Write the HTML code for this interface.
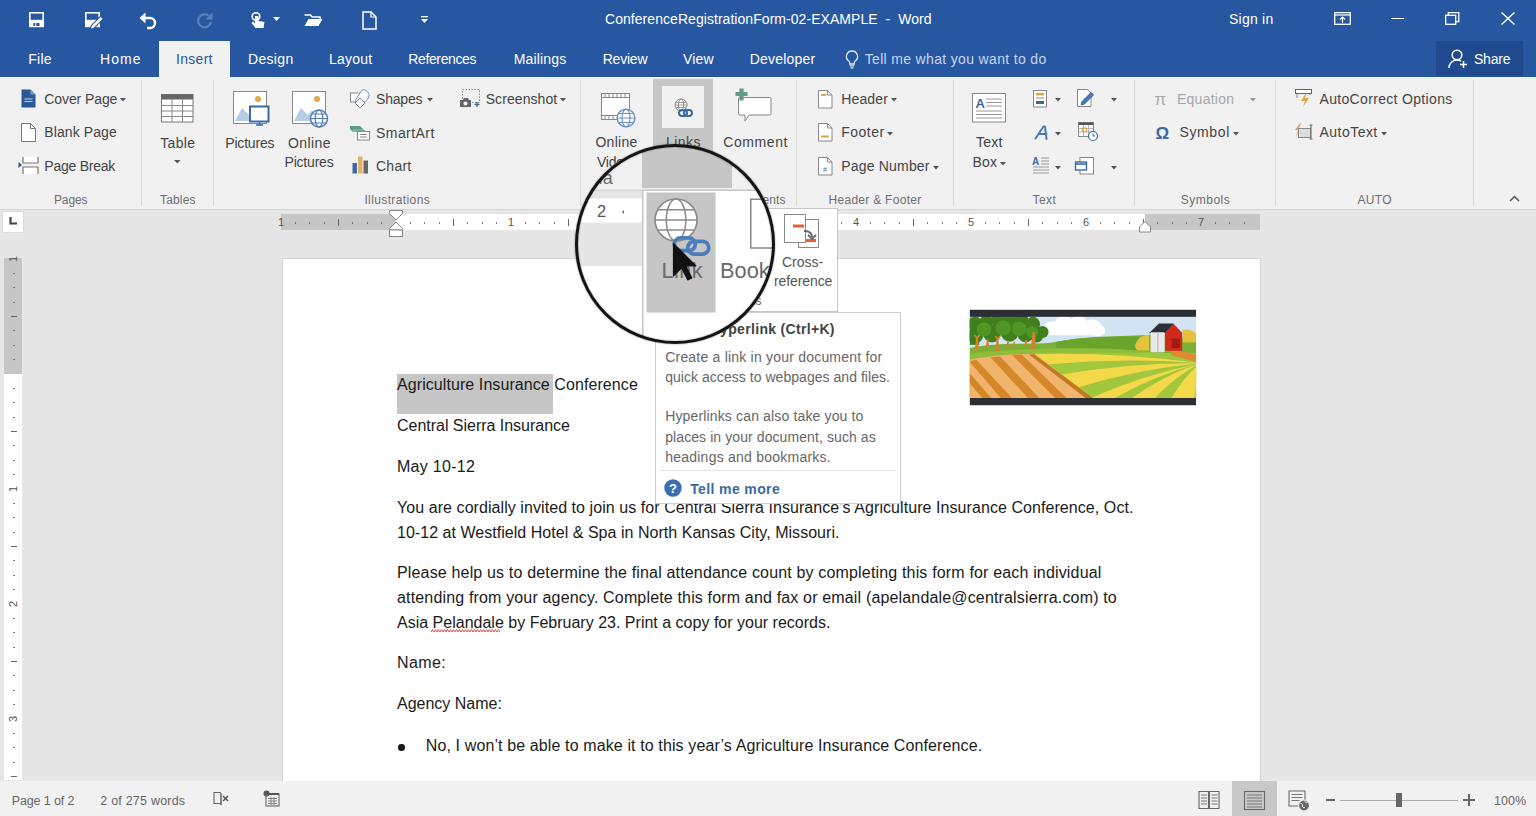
<!DOCTYPE html>
<html><head><meta charset="utf-8"><style>
html,body{margin:0;padding:0;}
body{width:1536px;height:816px;overflow:hidden;position:relative;background:#e6e6e6;font-family:"Liberation Sans", sans-serif;}
.t{position:absolute;white-space:pre;line-height:1;}
.r{position:absolute;}
svg.r{overflow:visible;}
</style></head><body>
<div class="r" style="left:0.00px;top:0.00px;width:1536.00px;height:77.00px;background:#2857a2;"></div>
<div class="r" style="left:159.00px;top:41.00px;width:71.00px;height:36.00px;background:#f1f1f1;"></div>
<div class="r" style="left:1436.00px;top:41.00px;width:87.00px;height:35.00px;background:#1f4b8e;"></div>
<svg class="r" style="left:29.00px;top:12.00px;" width="16" height="16" viewBox="0 0 16 16"><rect x="0" y="0" width="15" height="15.2" fill="#fff"/><rect x="1.6" y="1.6" width="11.8" height="6.2" fill="#2857a2"/><rect x="4.3" y="11" width="2" height="3" fill="#2857a2"/><rect x="7.3" y="11" width="3.2" height="3" fill="#2857a2"/></svg>
<svg class="r" style="left:85.00px;top:12.00px;" width="18" height="18" viewBox="0 0 18 18"><rect x="0" y="0" width="15" height="15.2" fill="#fff"/><rect x="1.6" y="1.6" width="11.8" height="6.2" fill="#2857a2"/><path d="M5 17.5l1.2-3.8 9.5-9.5 2.6 2.6-9.5 9.5z" fill="#fff" stroke="#2857a2" stroke-width="1.2"/></svg>
<svg class="r" style="left:139.00px;top:12.00px;" width="19" height="17" viewBox="0 0 19 17"><path d="M3 6h8a5 5 0 0 1 0 10H8" fill="none" stroke="#fff" stroke-width="2.4"/><path d="M0.5 6l6-5.5v11z" fill="#fff"/></svg>
<svg class="r" style="left:196.00px;top:12.00px;" width="17" height="17" viewBox="0 0 17 17"><path d="M13 4A6.5 6.5 0 1 0 15 10" fill="none" stroke="#5b7fb8" stroke-width="2.2"/><path d="M16.5 0.5v7h-7z" fill="#5b7fb8"/></svg>
<svg class="r" style="left:250.00px;top:12.00px;" width="17" height="17" viewBox="0 0 17 17"><circle cx="6" cy="4.5" r="3.8" fill="none" stroke="#fff" stroke-width="1.6"/><path d="M5 4v7l-2-1.5-1.5 1.5 4 5h8l1-6-6-1V4z" fill="#fff"/></svg>
<svg class="r" style="left:273.00px;top:17.00px;" width="8" height="5" viewBox="0 0 8 5"><path d="M0 0h7l-3.5 4z" fill="#fff"/></svg>
<svg class="r" style="left:304.00px;top:13.00px;" width="19" height="14" viewBox="0 0 19 14"><path d="M0.5 2h6l1.5 2h8v2" fill="none" stroke="#fff" stroke-width="1.5"/><path d="M0.5 2v11h14l4-7H4.5L0.5 13" fill="#fff"/></svg>
<svg class="r" style="left:362.00px;top:11.00px;" width="15" height="19" viewBox="0 0 15 19"><path d="M1 1h8l5 5v12H1z" fill="none" stroke="#fff" stroke-width="1.5"/><path d="M9 1v5h5" fill="none" stroke="#fff" stroke-width="1.2"/></svg>
<svg class="r" style="left:421.00px;top:16.00px;" width="8" height="8" viewBox="0 0 8 8"><rect x="0" y="0" width="7" height="1.3" fill="#fff"/><path d="M0 3h7l-3.5 4z" fill="#fff"/></svg>
<div class="t" style="left:605.00px;top:11.85px;font-size:14px;color:#ffffff;letter-spacing:0.051px;">ConferenceRegistrationForm-02-EXAMPLE  -  Word</div>
<div class="t" style="left:1229.00px;top:12.15px;font-size:14px;color:#ffffff;letter-spacing:0.232px;">Sign in</div>
<svg class="r" style="left:1334.00px;top:12.00px;" width="17" height="13" viewBox="0 0 17 13"><rect x="0.7" y="0.7" width="15.6" height="11.6" fill="none" stroke="#fff" stroke-width="1.3"/><path d="M0.7 3h15.6" stroke="#fff" stroke-width="1.2"/><path d="M8.5 11V5M6 7.5l2.5-2.5 2.5 2.5" fill="none" stroke="#fff" stroke-width="1.2"/></svg>
<div class="r" style="left:1391.00px;top:18.00px;width:13.00px;height:1.30px;background:#fff;"></div>
<svg class="r" style="left:1445.00px;top:12.00px;" width="15" height="13" viewBox="0 0 15 13"><rect x="0.7" y="3.3" width="10" height="9" fill="none" stroke="#fff" stroke-width="1.3"/><path d="M3.3 3.3V0.7h10.5v9h-3" fill="none" stroke="#fff" stroke-width="1.3"/></svg>
<svg class="r" style="left:1501.00px;top:12.00px;" width="14" height="13" viewBox="0 0 14 13"><path d="M0.5 0.5l13 12M13.5 0.5l-13 12" stroke="#fff" stroke-width="1.4"/></svg>
<div class="t" style="left:28.30px;top:51.65px;font-size:14px;color:#fff;letter-spacing:0.213px;">File</div>
<div class="t" style="left:100.00px;top:51.65px;font-size:14px;color:#fff;letter-spacing:1.051px;">Home</div>
<div class="t" style="left:176.00px;top:51.65px;font-size:14px;color:#2b579a;letter-spacing:0.297px;">Insert</div>
<div class="t" style="left:248.00px;top:51.65px;font-size:14px;color:#fff;letter-spacing:0.324px;">Design</div>
<div class="t" style="left:329.00px;top:51.65px;font-size:14px;color:#fff;letter-spacing:0.233px;">Layout</div>
<div class="t" style="left:408.30px;top:51.65px;font-size:14px;color:#fff;letter-spacing:-0.377px;">References</div>
<div class="t" style="left:513.70px;top:51.65px;font-size:14px;color:#fff;letter-spacing:0.164px;">Mailings</div>
<div class="t" style="left:602.70px;top:51.65px;font-size:14px;color:#fff;letter-spacing:-0.221px;">Review</div>
<div class="t" style="left:683.00px;top:51.65px;font-size:14px;color:#fff;letter-spacing:0.136px;">View</div>
<div class="t" style="left:749.70px;top:51.65px;font-size:14px;color:#fff;letter-spacing:0.211px;">Developer</div>
<svg class="r" style="left:845.00px;top:50.00px;" width="14" height="19" viewBox="0 0 14 19"><path d="M7 1a5.5 5.5 0 0 0-3.2 10c.6.5 1 1.3 1 2.2V14h4.4v-.8c0-.9.4-1.7 1-2.2A5.5 5.5 0 0 0 7 1z" fill="none" stroke="#dfe7f3" stroke-width="1.3"/><path d="M4.8 15.8h4.4M5.5 17.8h3" stroke="#dfe7f3" stroke-width="1.3"/></svg>
<div class="t" style="left:864.70px;top:51.65px;font-size:14px;color:#c6d6ee;letter-spacing:0.336px;">Tell me what you want to do</div>
<svg class="r" style="left:1448.00px;top:49.00px;" width="20" height="20" viewBox="0 0 20 20"><circle cx="9" cy="6" r="4.8" fill="none" stroke="#fff" stroke-width="1.5"/><path d="M1 19c0-4.5 3.5-8 8-8 1.5 0 2.8.4 4 1" fill="none" stroke="#fff" stroke-width="1.5"/><path d="M15.5 12v7M12 15.5h7" stroke="#fff" stroke-width="1.5"/></svg>
<div class="t" style="left:1474.00px;top:52.15px;font-size:14px;color:#fff;letter-spacing:-0.215px;">Share</div>
<div class="r" style="left:0.00px;top:77.00px;width:1536.00px;height:132.00px;background:#f1f1f1;"></div>
<div class="r" style="left:0.00px;top:209.00px;width:1536.00px;height:1.00px;background:#d6d6d6;"></div>
<div class="r" style="left:140.50px;top:80.00px;width:1.00px;height:126.00px;background:#dadada;"></div>
<div class="r" style="left:213.00px;top:80.00px;width:1.00px;height:126.00px;background:#dadada;"></div>
<div class="r" style="left:579.50px;top:80.00px;width:1.00px;height:126.00px;background:#dadada;"></div>
<div class="r" style="left:795.50px;top:80.00px;width:1.00px;height:126.00px;background:#dadada;"></div>
<div class="r" style="left:952.50px;top:80.00px;width:1.00px;height:126.00px;background:#dadada;"></div>
<div class="r" style="left:1134.00px;top:80.00px;width:1.00px;height:126.00px;background:#dadada;"></div>
<div class="r" style="left:1274.50px;top:80.00px;width:1.00px;height:126.00px;background:#dadada;"></div>
<div class="r" style="left:1473.00px;top:80.00px;width:1.00px;height:126.00px;background:#dadada;"></div>
<svg class="r" style="left:21.00px;top:89.00px;" width="15" height="19" viewBox="0 0 15 19"><path d="M0.5 0.5h9l5 5v13h-14z" fill="#2b5797"/><path d="M9.5 0.5v5h5" fill="#7a9ccc"/><path d="M3.5 10h8M3.5 12.5h8" stroke="#c5d4ea" stroke-width="1"/></svg>
<div class="t" style="left:44.30px;top:92.05px;font-size:14px;color:#444;letter-spacing:-0.093px;">Cover Page</div>
<svg class="r" style="left:120.00px;top:98.00px;" width="6" height="4" viewBox="0 0 6 4"><path d="M0 0h6l-3 3.5z" fill="#555"/></svg>
<svg class="r" style="left:21.00px;top:123.00px;" width="15" height="19" viewBox="0 0 15 19"><path d="M0.5 0.5h9l5 5v13h-14z" fill="#fff" stroke="#777" stroke-width="1"/><path d="M9.5 0.5v5h5" fill="none" stroke="#777" stroke-width="1"/></svg>
<div class="t" style="left:44.30px;top:125.15px;font-size:14px;color:#444;letter-spacing:0.099px;">Blank Page</div>
<svg class="r" style="left:18.00px;top:156.00px;" width="22" height="19" viewBox="0 0 22 19"><path d="M5 1v6h15V1M5 18v-7h15v7" fill="#fff" stroke="#777" stroke-width="1.2"/><path d="M0.5 6l3.5 3-3.5 3z" fill="#2b5797"/></svg>
<div class="t" style="left:44.30px;top:158.95px;font-size:14px;color:#444;letter-spacing:-0.240px;">Page Break</div>
<div class="t" style="left:54.00px;top:194.24px;font-size:12px;color:#6e6e6e;letter-spacing:-0.132px;">Pages</div>
<svg class="r" style="left:160.50px;top:93.50px;" width="33" height="29" viewBox="0 0 33 29"><rect x="0.5" y="0.5" width="31.5" height="27.5" fill="#fff" stroke="#777" stroke-width="1"/><rect x="0.5" y="0.5" width="31.5" height="5" fill="#666"/><path d="M0.5 11.5h31.5M0.5 17h31.5M0.5 22.5h31.5M11 5.5v22.5M21.5 5.5v22.5" stroke="#888" stroke-width="1"/></svg>
<div class="t" style="left:160.20px;top:135.85px;font-size:14px;color:#444;letter-spacing:0.333px;">Table</div>
<svg class="r" style="left:174.00px;top:159.50px;" width="7" height="4" viewBox="0 0 7 4"><path d="M0 0h6.5l-3.25 3.5z" fill="#555"/></svg>
<div class="t" style="left:160.00px;top:194.24px;font-size:12px;color:#6e6e6e;letter-spacing:0.162px;">Tables</div>
<svg class="r" style="left:233.00px;top:91.00px;" width="37" height="37" viewBox="0 0 37 37"><rect x="0.5" y="0.5" width="33" height="32" fill="#fff" stroke="#888" stroke-width="1"/><circle cx="25" cy="8" r="3" fill="#e1a94f"/><path d="M2 30l7-13 7 7 4-5 10 11z" fill="#b7cde6"/><rect x="17" y="15.5" width="18.5" height="15" fill="#fff" stroke="#3a6aa6" stroke-width="2"/><path d="M23 34h7M26.5 31v3" stroke="#3a6aa6" stroke-width="1.5"/></svg>
<div class="t" style="left:225.30px;top:135.85px;font-size:14px;color:#444;letter-spacing:-0.196px;">Pictures</div>
<svg class="r" style="left:292.00px;top:91.00px;" width="37" height="37" viewBox="0 0 37 37"><rect x="0.5" y="0.5" width="33" height="32" fill="#fff" stroke="#888" stroke-width="1"/><circle cx="25" cy="8" r="3" fill="#e1a94f"/><path d="M2 30l7-13 7 7 4-5 10 11z" fill="#b7cde6"/><circle cx="27" cy="27.5" r="8.5" fill="#fff" stroke="#4f7bb8" stroke-width="1.5"/><ellipse cx="27" cy="27.5" rx="3.8" ry="8.5" fill="none" stroke="#4f7bb8" stroke-width="1.2"/><path d="M18.5 27.5h17M19.8 23h14.5M19.8 32h14.5" stroke="#4f7bb8" stroke-width="1.1"/></svg>
<div class="t" style="left:288.00px;top:135.85px;font-size:14px;color:#444;letter-spacing:0.406px;">Online</div>
<div class="t" style="left:284.50px;top:155.05px;font-size:14px;color:#444;letter-spacing:-0.196px;">Pictures</div>
<svg class="r" style="left:350.00px;top:89.00px;" width="21" height="19" viewBox="0 0 21 19"><rect x="0.5" y="4" width="10" height="9" fill="#fff" stroke="#888" stroke-width="1"/><path d="M12 1c3.5-1 7.5 2 7 6-.5 3-3 5-6 7l-3 3-5-5z" fill="#fff" stroke="#6e93c4" stroke-width="1"/><path d="M10 9l5 5-5 5-5-5z" fill="#fff" stroke="#888" stroke-width="1"/></svg>
<div class="t" style="left:376.00px;top:92.15px;font-size:14px;color:#444;letter-spacing:-0.197px;">Shapes</div>
<svg class="r" style="left:426.50px;top:98.00px;" width="6" height="4" viewBox="0 0 6 4"><path d="M0 0h6l-3 3.5z" fill="#555"/></svg>
<svg class="r" style="left:460.00px;top:89.00px;" width="21" height="19" viewBox="0 0 21 19"><rect x="2.5" y="0.5" width="17" height="13" fill="none" stroke="#888" stroke-width="1" stroke-dasharray="1.5 1.5"/><path d="M0 11h3l1-2h4l1 2h2v7H0z" fill="#666"/><circle cx="5.5" cy="14.5" r="2" fill="#f1f1f1"/><path d="M14.5 15.5h5M17 13v5" stroke="#3a6aa6" stroke-width="1.4"/></svg>
<div class="t" style="left:485.70px;top:92.15px;font-size:14px;color:#444;letter-spacing:0.075px;">Screenshot</div>
<svg class="r" style="left:559.50px;top:98.00px;" width="6" height="4" viewBox="0 0 6 4"><path d="M0 0h6l-3 3.5z" fill="#555"/></svg>
<svg class="r" style="left:350.00px;top:125.00px;" width="21" height="16" viewBox="0 0 21 16"><path d="M0 1h10l3 3H5l-2 3-3-3z" fill="#5e9a8a"/><path d="M3 4h10l4 3H3z" fill="#7db0a2"/><rect x="7.5" y="6.5" width="12" height="8.5" fill="#fff" stroke="#888" stroke-width="1"/><path d="M10 9.5h7M10 12h7" stroke="#888" stroke-width="1"/></svg>
<div class="t" style="left:376.00px;top:125.95px;font-size:14px;color:#444;letter-spacing:0.439px;">SmartArt</div>
<svg class="r" style="left:352.00px;top:156.00px;" width="17" height="18" viewBox="0 0 17 18"><rect x="0.5" y="7" width="4.5" height="10.5" fill="#3a6aa6"/><rect x="6" y="0.5" width="4.5" height="17" fill="#e5b06a"/><rect x="11.5" y="4.5" width="4.5" height="13" fill="#666"/></svg>
<div class="t" style="left:376.00px;top:159.15px;font-size:14px;color:#444;letter-spacing:0.241px;">Chart</div>
<div class="t" style="left:364.40px;top:194.24px;font-size:12px;color:#6e6e6e;letter-spacing:0.384px;">Illustrations</div>
<svg class="r" style="left:601.00px;top:93.00px;" width="35" height="35" viewBox="0 0 35 35"><rect x="0.5" y="0.5" width="28" height="26" fill="#fff" stroke="#888" stroke-width="1"/><path d="M0.5 4.5h28M0.5 22.5h28" stroke="#888" stroke-width="1"/><path d="M4 0.5v4M8 0.5v4M12 0.5v4M16 0.5v4M20 0.5v4M24 0.5v4M4 22.5v4M8 22.5v4M12 22.5v4" stroke="#888" stroke-width="1"/><circle cx="25" cy="25" r="8.8" fill="#fff" stroke="#6e93c4" stroke-width="1.5"/><ellipse cx="25" cy="25" rx="4" ry="8.8" fill="none" stroke="#6e93c4" stroke-width="1.2"/><path d="M16.2 25h17.6M17.5 20.5h15M17.5 29.5h15" stroke="#6e93c4" stroke-width="1.1"/></svg>
<div class="t" style="left:595.40px;top:135.35px;font-size:14px;color:#444;letter-spacing:0.286px;">Online</div>
<div class="t" style="left:597.00px;top:154.65px;font-size:14px;color:#444;letter-spacing:-0.264px;">Video</div>
<div class="t" style="left:600.00px;top:194.24px;font-size:12px;color:#6e6e6e;letter-spacing:0.204px;">Media</div>
<div class="r" style="left:653.00px;top:79.00px;width:60.00px;height:128.00px;background:#c6c6c6;"></div>
<div class="r" style="left:661.50px;top:86.30px;width:42.50px;height:42.00px;background:#f1f1f1;"></div>
<svg class="r" style="left:674.00px;top:98.00px;" width="20" height="21" viewBox="0 0 20 21"><circle cx="7" cy="7" r="6" fill="#fff" stroke="#888" stroke-width="1"/><ellipse cx="7" cy="7" rx="2.6" ry="6" fill="none" stroke="#888" stroke-width="0.9"/><path d="M1 7h12M2 4.5h10M2 9.5h10" stroke="#888" stroke-width="0.8"/><rect x="5" y="12" width="8" height="6" rx="3" fill="none" stroke="#3a6aa6" stroke-width="2"/><rect x="10" y="12" width="8" height="6" rx="3" fill="none" stroke="#3a6aa6" stroke-width="2"/></svg>
<div class="t" style="left:666.00px;top:135.35px;font-size:14px;color:#444;letter-spacing:0.454px;">Links</div>
<div class="t" style="left:694.00px;top:194.24px;font-size:12px;color:#6e6e6e;letter-spacing:0.871px;">Links</div>
<svg class="r" style="left:735.00px;top:88.00px;" width="37" height="35" viewBox="0 0 37 35"><path d="M5 9.5h29.5a1.5 1.5 0 0 1 1.5 1.5v14.5a1.5 1.5 0 0 1-1.5 1.5H14l-4 6v-6H5a1.5 1.5 0 0 1-1.5-1.5V11A1.5 1.5 0 0 1 5 9.5z" fill="#fff" stroke="#888" stroke-width="1"/><path d="M0.5 6h12M6.5 0.5v12" stroke="#5f9a8a" stroke-width="4.2"/></svg>
<div class="t" style="left:723.30px;top:135.35px;font-size:14px;color:#444;letter-spacing:0.586px;">Comment</div>
<div class="t" style="left:727.00px;top:194.24px;font-size:12px;color:#6e6e6e;letter-spacing:0.069px;">Comments</div>
<svg class="r" style="left:818.00px;top:89.50px;" width="15" height="19" viewBox="0 0 15 19"><path d="M0.5 0.5h9l4.5 4.5v13h-13.5z" fill="#fff" stroke="#888" stroke-width="1"/><path d="M9.5 0.5v4.5h4.5" fill="none" stroke="#888" stroke-width="1"/><rect x="3" y="4" width="5" height="2" fill="#e0a54a"/></svg>
<div class="t" style="left:841.30px;top:91.65px;font-size:14px;color:#444;letter-spacing:0.116px;">Header</div>
<svg class="r" style="left:891.00px;top:98.00px;" width="6" height="4" viewBox="0 0 6 4"><path d="M0 0h6l-3 3.5z" fill="#555"/></svg>
<svg class="r" style="left:818.00px;top:123.00px;" width="15" height="19" viewBox="0 0 15 19"><path d="M0.5 0.5h9l4.5 4.5v13h-13.5z" fill="#fff" stroke="#888" stroke-width="1"/><path d="M9.5 0.5v4.5h4.5" fill="none" stroke="#888" stroke-width="1"/><rect x="3" y="12.5" width="8" height="2" fill="#e0a54a"/></svg>
<div class="t" style="left:841.30px;top:125.40px;font-size:14px;color:#444;letter-spacing:0.457px;">Footer</div>
<svg class="r" style="left:886.50px;top:132.00px;" width="6" height="4" viewBox="0 0 6 4"><path d="M0 0h6l-3 3.5z" fill="#555"/></svg>
<svg class="r" style="left:818.00px;top:157.00px;" width="15" height="19" viewBox="0 0 15 19"><path d="M0.5 0.5h9l4.5 4.5v13h-13.5z" fill="#fff" stroke="#888" stroke-width="1"/><path d="M9.5 0.5v4.5h4.5" fill="none" stroke="#888" stroke-width="1"/><text x="5" y="14.5" font-size="7" fill="#3a6aa6" font-family="Liberation Sans">#</text></svg>
<div class="t" style="left:841.30px;top:159.15px;font-size:14px;color:#444;letter-spacing:0.182px;">Page Number</div>
<svg class="r" style="left:932.50px;top:166.00px;" width="6" height="4" viewBox="0 0 6 4"><path d="M0 0h6l-3 3.5z" fill="#555"/></svg>
<div class="t" style="left:828.50px;top:194.24px;font-size:12px;color:#6e6e6e;letter-spacing:0.288px;">Header &amp; Footer</div>
<svg class="r" style="left:971.50px;top:93.00px;" width="35" height="30" viewBox="0 0 35 30"><rect x="0.5" y="0.5" width="33" height="28.5" fill="#fff" stroke="#888" stroke-width="1"/><text x="3.5" y="15" font-size="13" font-weight="bold" fill="#3a6aa6" font-family="Liberation Sans">A</text><path d="M14 6h16M14 9.5h16M14 13h16M4 18h26M4 21.5h26M4 25h26" stroke="#999" stroke-width="1"/></svg>
<div class="t" style="left:976.00px;top:135.40px;font-size:14px;color:#444;letter-spacing:0.275px;">Text</div>
<div class="t" style="left:972.50px;top:154.65px;font-size:14px;color:#444;letter-spacing:0.188px;">Box</div>
<svg class="r" style="left:999.50px;top:161.50px;" width="6" height="4" viewBox="0 0 6 4"><path d="M0 0h6l-3 3.5z" fill="#555"/></svg>
<svg class="r" style="left:1033.00px;top:89.50px;" width="15" height="18" viewBox="0 0 15 18"><rect x="0.5" y="0.5" width="13" height="16.5" fill="#fff" stroke="#888" stroke-width="1"/><rect x="3" y="3" width="8" height="2.5" fill="#e0a54a"/><path d="M3 8h8" stroke="#888" stroke-width="1"/><rect x="3" y="11" width="8" height="3" fill="#3a6aa6"/></svg>
<svg class="r" style="left:1055.00px;top:98.00px;" width="6" height="4" viewBox="0 0 6 4"><path d="M0 0h6l-3 3.5z" fill="#555"/></svg>
<svg class="r" style="left:1034.00px;top:125.00px;" width="14" height="15" viewBox="0 0 14 15"><path d="M1.5 13.5L9.5 1.5h1.5l1.5 12.5M4.5 9h8" fill="none" stroke="#4a78b5" stroke-width="2" stroke-linejoin="round" stroke-linecap="round"/></svg>
<svg class="r" style="left:1055.00px;top:132.00px;" width="6" height="4" viewBox="0 0 6 4"><path d="M0 0h6l-3 3.5z" fill="#555"/></svg>
<svg class="r" style="left:1032.00px;top:156.00px;" width="19" height="19" viewBox="0 0 19 19"><text x="0" y="9" font-size="10" font-weight="bold" fill="#3a6aa6" font-family="Liberation Sans">A</text><path d="M9 2h8M9 5h8M9 8h8M1 11h16M1 14h16M1 17h16" stroke="#999" stroke-width="1"/></svg>
<svg class="r" style="left:1055.00px;top:166.00px;" width="6" height="4" viewBox="0 0 6 4"><path d="M0 0h6l-3 3.5z" fill="#555"/></svg>
<svg class="r" style="left:1076.50px;top:89.00px;" width="19" height="19" viewBox="0 0 19 19"><path d="M0.5 0.5h10l3.5 3.5v13.5H0.5z" fill="#fff" stroke="#888" stroke-width="1"/><path d="M4 16l1-3.5 9-9 2.5 2.5-9 9z" fill="#4a78b5" stroke="#3a6aa6" stroke-width="1"/></svg>
<svg class="r" style="left:1110.50px;top:98.00px;" width="6" height="4" viewBox="0 0 6 4"><path d="M0 0h6l-3 3.5z" fill="#555"/></svg>
<svg class="r" style="left:1077.50px;top:122.00px;" width="21" height="20" viewBox="0 0 21 20"><rect x="0.5" y="0.5" width="15" height="14" fill="#fff" stroke="#888" stroke-width="1"/><rect x="0.5" y="0.5" width="15" height="2.5" fill="#555"/><path d="M0.5 6.5h15M0.5 10h15M5.5 3v11.5M10.5 3v11.5" stroke="#aaa" stroke-width="0.9"/><rect x="4.5" y="6" width="4" height="3.5" fill="none" stroke="#e0a54a" stroke-width="1"/><circle cx="15" cy="14" r="4.5" fill="#fff" stroke="#3a6aa6" stroke-width="1.2"/><path d="M15 11.5v2.5h2" fill="none" stroke="#3a6aa6" stroke-width="1"/></svg>
<svg class="r" style="left:1075.00px;top:157.00px;" width="20" height="18" viewBox="0 0 20 18"><rect x="5" y="0.5" width="13.5" height="16.5" fill="#fff" stroke="#888" stroke-width="1"/><rect x="0.5" y="5" width="11" height="8" fill="#fff" stroke="#3a6aa6" stroke-width="1.4"/><path d="M0.5 7h11" stroke="#3a6aa6" stroke-width="1.6"/></svg>
<svg class="r" style="left:1110.50px;top:166.00px;" width="6" height="4" viewBox="0 0 6 4"><path d="M0 0h6l-3 3.5z" fill="#555"/></svg>
<div class="t" style="left:1032.50px;top:194.24px;font-size:12px;color:#6e6e6e;letter-spacing:0.414px;">Text</div>
<div class="t" style="left:1154.50px;top:91.11px;font-size:17px;color:#aaa;font-family:"Liberation Serif";">π</div>
<div class="t" style="left:1177.00px;top:91.65px;font-size:14px;color:#a6a6a6;letter-spacing:0.247px;">Equation</div>
<svg class="r" style="left:1250.00px;top:98.00px;" width="6" height="4" viewBox="0 0 6 4"><path d="M0 0h6l-3 3.5z" fill="#999"/></svg>
<div class="t" style="left:1155.50px;top:124.61px;font-size:17px;color:#3a6aa6;font-weight:bold;font-family:"Liberation Serif";">Ω</div>
<div class="t" style="left:1179.50px;top:125.15px;font-size:14px;color:#444;letter-spacing:0.613px;">Symbol</div>
<svg class="r" style="left:1232.50px;top:132.00px;" width="6" height="4" viewBox="0 0 6 4"><path d="M0 0h6l-3 3.5z" fill="#555"/></svg>
<div class="t" style="left:1180.75px;top:194.24px;font-size:12px;color:#6e6e6e;letter-spacing:0.497px;">Symbols</div>
<svg class="r" style="left:1295.00px;top:89.00px;" width="18" height="19" viewBox="0 0 18 19"><rect x="0.5" y="0.5" width="16" height="4" fill="#fff" stroke="#3a6aa6" stroke-width="1"/><path d="M2 5v4M15 5v1" stroke="#888" stroke-width="1"/><path d="M11 4l-5 8h4l-2 6 6-9h-4l2-5z" fill="#e0a54a"/></svg>
<div class="t" style="left:1319.50px;top:91.65px;font-size:14px;color:#444;letter-spacing:0.329px;">AutoCorrect Options</div>
<svg class="r" style="left:1294.00px;top:122.00px;" width="21" height="19" viewBox="0 0 21 19"><path d="M6 1L1 8h3l-2 6 6-8H5l2-5z" fill="#e0a54a"/><rect x="4.5" y="6.5" width="12" height="9" fill="#ddd" stroke="#888" stroke-width="1"/><path d="M17 3v14M15.5 3h3M15.5 17h3" stroke="#666" stroke-width="1"/></svg>
<div class="t" style="left:1319.50px;top:125.15px;font-size:14px;color:#444;letter-spacing:0.468px;">AutoText</div>
<svg class="r" style="left:1380.50px;top:132.00px;" width="6" height="4" viewBox="0 0 6 4"><path d="M0 0h6l-3 3.5z" fill="#555"/></svg>
<div class="t" style="left:1357.50px;top:194.24px;font-size:12px;color:#6e6e6e;letter-spacing:0.294px;">AUTO</div>
<svg class="r" style="left:1509.00px;top:195.00px;" width="11" height="7" viewBox="0 0 11 7"><path d="M1 6l4.5-4.5L10 6" fill="none" stroke="#555" stroke-width="1.5"/></svg>
<div class="r" style="left:0.00px;top:210.00px;width:1536.00px;height:571.00px;background:#e6e6e6;"></div>
<div class="r" style="left:3.00px;top:212.00px;width:20.00px;height:20.00px;background:#fff;box-shadow:0 0 0 1px #dcdcdc;"></div>
<svg class="r" style="left:9.00px;top:217.00px;" width="8" height="8" viewBox="0 0 8 8"><path d="M1.5 0v6.5H8" fill="none" stroke="#444" stroke-width="2.2"/></svg>
<div class="r" style="left:281.00px;top:213.50px;width:979.00px;height:16.50px;background:#fff;"></div>
<div class="r" style="left:281.00px;top:213.50px;width:115.00px;height:16.50px;background:#c6c6c6;"></div>
<div class="r" style="left:1145.00px;top:213.50px;width:115.00px;height:16.50px;background:#c6c6c6;"></div>
<div class="t" style="left:278.00px;top:216.69px;font-size:11px;color:#555;">1</div>
<div class="r" style="left:294.88px;top:221.50px;width:1.10px;height:2.00px;background:#777;"></div>
<div class="r" style="left:309.25px;top:221.50px;width:1.10px;height:2.00px;background:#777;"></div>
<div class="r" style="left:323.62px;top:221.50px;width:1.10px;height:2.00px;background:#777;"></div>
<div class="r" style="left:338.00px;top:219.00px;width:1.10px;height:7.00px;background:#666;"></div>
<div class="r" style="left:352.38px;top:221.50px;width:1.10px;height:2.00px;background:#777;"></div>
<div class="r" style="left:366.75px;top:221.50px;width:1.10px;height:2.00px;background:#777;"></div>
<div class="r" style="left:381.12px;top:221.50px;width:1.10px;height:2.00px;background:#777;"></div>
<div class="r" style="left:409.88px;top:221.50px;width:1.10px;height:2.00px;background:#777;"></div>
<div class="r" style="left:424.25px;top:221.50px;width:1.10px;height:2.00px;background:#777;"></div>
<div class="r" style="left:438.62px;top:221.50px;width:1.10px;height:2.00px;background:#777;"></div>
<div class="r" style="left:453.00px;top:219.00px;width:1.10px;height:7.00px;background:#666;"></div>
<div class="r" style="left:467.38px;top:221.50px;width:1.10px;height:2.00px;background:#777;"></div>
<div class="r" style="left:481.75px;top:221.50px;width:1.10px;height:2.00px;background:#777;"></div>
<div class="r" style="left:496.12px;top:221.50px;width:1.10px;height:2.00px;background:#777;"></div>
<div class="t" style="left:508.00px;top:216.69px;font-size:11px;color:#555;">1</div>
<div class="r" style="left:524.88px;top:221.50px;width:1.10px;height:2.00px;background:#777;"></div>
<div class="r" style="left:539.25px;top:221.50px;width:1.10px;height:2.00px;background:#777;"></div>
<div class="r" style="left:553.62px;top:221.50px;width:1.10px;height:2.00px;background:#777;"></div>
<div class="r" style="left:568.00px;top:219.00px;width:1.10px;height:7.00px;background:#666;"></div>
<div class="r" style="left:582.38px;top:221.50px;width:1.10px;height:2.00px;background:#777;"></div>
<div class="r" style="left:596.75px;top:221.50px;width:1.10px;height:2.00px;background:#777;"></div>
<div class="r" style="left:611.12px;top:221.50px;width:1.10px;height:2.00px;background:#777;"></div>
<div class="t" style="left:623.00px;top:216.69px;font-size:11px;color:#555;">2</div>
<div class="r" style="left:639.88px;top:221.50px;width:1.10px;height:2.00px;background:#777;"></div>
<div class="r" style="left:654.25px;top:221.50px;width:1.10px;height:2.00px;background:#777;"></div>
<div class="r" style="left:668.62px;top:221.50px;width:1.10px;height:2.00px;background:#777;"></div>
<div class="r" style="left:683.00px;top:219.00px;width:1.10px;height:7.00px;background:#666;"></div>
<div class="r" style="left:697.38px;top:221.50px;width:1.10px;height:2.00px;background:#777;"></div>
<div class="r" style="left:711.75px;top:221.50px;width:1.10px;height:2.00px;background:#777;"></div>
<div class="r" style="left:726.12px;top:221.50px;width:1.10px;height:2.00px;background:#777;"></div>
<div class="t" style="left:738.00px;top:216.69px;font-size:11px;color:#555;">3</div>
<div class="r" style="left:754.88px;top:221.50px;width:1.10px;height:2.00px;background:#777;"></div>
<div class="r" style="left:769.25px;top:221.50px;width:1.10px;height:2.00px;background:#777;"></div>
<div class="r" style="left:783.62px;top:221.50px;width:1.10px;height:2.00px;background:#777;"></div>
<div class="r" style="left:798.00px;top:219.00px;width:1.10px;height:7.00px;background:#666;"></div>
<div class="r" style="left:812.38px;top:221.50px;width:1.10px;height:2.00px;background:#777;"></div>
<div class="r" style="left:826.75px;top:221.50px;width:1.10px;height:2.00px;background:#777;"></div>
<div class="r" style="left:841.12px;top:221.50px;width:1.10px;height:2.00px;background:#777;"></div>
<div class="t" style="left:853.00px;top:216.69px;font-size:11px;color:#555;">4</div>
<div class="r" style="left:869.88px;top:221.50px;width:1.10px;height:2.00px;background:#777;"></div>
<div class="r" style="left:884.25px;top:221.50px;width:1.10px;height:2.00px;background:#777;"></div>
<div class="r" style="left:898.62px;top:221.50px;width:1.10px;height:2.00px;background:#777;"></div>
<div class="r" style="left:913.00px;top:219.00px;width:1.10px;height:7.00px;background:#666;"></div>
<div class="r" style="left:927.38px;top:221.50px;width:1.10px;height:2.00px;background:#777;"></div>
<div class="r" style="left:941.75px;top:221.50px;width:1.10px;height:2.00px;background:#777;"></div>
<div class="r" style="left:956.12px;top:221.50px;width:1.10px;height:2.00px;background:#777;"></div>
<div class="t" style="left:968.00px;top:216.69px;font-size:11px;color:#555;">5</div>
<div class="r" style="left:984.88px;top:221.50px;width:1.10px;height:2.00px;background:#777;"></div>
<div class="r" style="left:999.25px;top:221.50px;width:1.10px;height:2.00px;background:#777;"></div>
<div class="r" style="left:1013.62px;top:221.50px;width:1.10px;height:2.00px;background:#777;"></div>
<div class="r" style="left:1028.00px;top:219.00px;width:1.10px;height:7.00px;background:#666;"></div>
<div class="r" style="left:1042.38px;top:221.50px;width:1.10px;height:2.00px;background:#777;"></div>
<div class="r" style="left:1056.75px;top:221.50px;width:1.10px;height:2.00px;background:#777;"></div>
<div class="r" style="left:1071.12px;top:221.50px;width:1.10px;height:2.00px;background:#777;"></div>
<div class="t" style="left:1083.00px;top:216.69px;font-size:11px;color:#555;">6</div>
<div class="r" style="left:1099.88px;top:221.50px;width:1.10px;height:2.00px;background:#777;"></div>
<div class="r" style="left:1114.25px;top:221.50px;width:1.10px;height:2.00px;background:#777;"></div>
<div class="r" style="left:1128.62px;top:221.50px;width:1.10px;height:2.00px;background:#777;"></div>
<div class="r" style="left:1143.00px;top:219.00px;width:1.10px;height:7.00px;background:#666;"></div>
<div class="r" style="left:1157.38px;top:221.50px;width:1.10px;height:2.00px;background:#777;"></div>
<div class="r" style="left:1171.75px;top:221.50px;width:1.10px;height:2.00px;background:#777;"></div>
<div class="r" style="left:1186.12px;top:221.50px;width:1.10px;height:2.00px;background:#777;"></div>
<div class="t" style="left:1198.00px;top:216.69px;font-size:11px;color:#555;">7</div>
<div class="r" style="left:1214.88px;top:221.50px;width:1.10px;height:2.00px;background:#777;"></div>
<div class="r" style="left:1229.25px;top:221.50px;width:1.10px;height:2.00px;background:#777;"></div>
<div class="r" style="left:1243.62px;top:221.50px;width:1.10px;height:2.00px;background:#777;"></div>
<svg class="r" style="left:389.00px;top:210.00px;" width="15" height="28" viewBox="0 0 15 28"><path d="M0.5 0.5h13v3l-6.5 6.5-6.5-6.5z" fill="#fff" stroke="#888" stroke-width="1"/><path d="M7 12l6.5 6.5v1.5h-13v-1.5z" fill="#fff" stroke="#888" stroke-width="1"/><rect x="0.5" y="20" width="13" height="6.5" fill="#fff" stroke="#888" stroke-width="1"/></svg>
<svg class="r" style="left:1139.00px;top:220.50px;" width="13" height="12" viewBox="0 0 13 12"><path d="M6 0.5l5.5 5.5v5h-11v-5z" fill="#fff" stroke="#888" stroke-width="1"/></svg>
<div class="r" style="left:4.00px;top:257.50px;width:18.00px;height:522.50px;background:#fff;"></div>
<div class="r" style="left:4.00px;top:257.50px;width:18.00px;height:116.50px;background:#c6c6c6;"></div>
<div class="r" style="left:12.50px;top:272.88px;width:2.00px;height:1.10px;background:#777;"></div>
<div class="r" style="left:12.50px;top:287.25px;width:2.00px;height:1.10px;background:#777;"></div>
<div class="r" style="left:12.50px;top:301.62px;width:2.00px;height:1.10px;background:#777;"></div>
<div class="r" style="left:10.50px;top:316.00px;width:6.00px;height:1.10px;background:#666;"></div>
<div class="r" style="left:12.50px;top:330.38px;width:2.00px;height:1.10px;background:#777;"></div>
<div class="r" style="left:12.50px;top:344.75px;width:2.00px;height:1.10px;background:#777;"></div>
<div class="r" style="left:12.50px;top:359.12px;width:2.00px;height:1.10px;background:#777;"></div>
<div class="r" style="left:12.50px;top:387.88px;width:2.00px;height:1.10px;background:#777;"></div>
<div class="r" style="left:12.50px;top:402.25px;width:2.00px;height:1.10px;background:#777;"></div>
<div class="r" style="left:12.50px;top:416.62px;width:2.00px;height:1.10px;background:#777;"></div>
<div class="r" style="left:10.50px;top:431.00px;width:6.00px;height:1.10px;background:#666;"></div>
<div class="r" style="left:12.50px;top:445.38px;width:2.00px;height:1.10px;background:#777;"></div>
<div class="r" style="left:12.50px;top:459.75px;width:2.00px;height:1.10px;background:#777;"></div>
<div class="r" style="left:12.50px;top:474.12px;width:2.00px;height:1.10px;background:#777;"></div>
<div class="r" style="left:12.50px;top:502.88px;width:2.00px;height:1.10px;background:#777;"></div>
<div class="r" style="left:12.50px;top:517.25px;width:2.00px;height:1.10px;background:#777;"></div>
<div class="r" style="left:12.50px;top:531.62px;width:2.00px;height:1.10px;background:#777;"></div>
<div class="r" style="left:10.50px;top:546.00px;width:6.00px;height:1.10px;background:#666;"></div>
<div class="r" style="left:12.50px;top:560.38px;width:2.00px;height:1.10px;background:#777;"></div>
<div class="r" style="left:12.50px;top:574.75px;width:2.00px;height:1.10px;background:#777;"></div>
<div class="r" style="left:12.50px;top:589.12px;width:2.00px;height:1.10px;background:#777;"></div>
<div class="r" style="left:12.50px;top:617.88px;width:2.00px;height:1.10px;background:#777;"></div>
<div class="r" style="left:12.50px;top:632.25px;width:2.00px;height:1.10px;background:#777;"></div>
<div class="r" style="left:12.50px;top:646.62px;width:2.00px;height:1.10px;background:#777;"></div>
<div class="r" style="left:10.50px;top:661.00px;width:6.00px;height:1.10px;background:#666;"></div>
<div class="r" style="left:12.50px;top:675.38px;width:2.00px;height:1.10px;background:#777;"></div>
<div class="r" style="left:12.50px;top:689.75px;width:2.00px;height:1.10px;background:#777;"></div>
<div class="r" style="left:12.50px;top:704.12px;width:2.00px;height:1.10px;background:#777;"></div>
<div class="r" style="left:12.50px;top:732.88px;width:2.00px;height:1.10px;background:#777;"></div>
<div class="r" style="left:12.50px;top:747.25px;width:2.00px;height:1.10px;background:#777;"></div>
<div class="r" style="left:12.50px;top:761.62px;width:2.00px;height:1.10px;background:#777;"></div>
<div class="r" style="left:10.50px;top:776.00px;width:6.00px;height:1.10px;background:#666;"></div>
<svg class="r" style="left:0.00px;top:0.00px;" width="30" height="816" viewBox="0 0 30 816"><text x="13" y="259.0" transform="rotate(-90 13 259.0)" text-anchor="middle" dominant-baseline="central" font-size="11" fill="#555" font-family="Liberation Sans">1</text><text x="13" y="489.0" transform="rotate(-90 13 489.0)" text-anchor="middle" dominant-baseline="central" font-size="11" fill="#555" font-family="Liberation Sans">1</text><text x="13" y="604.0" transform="rotate(-90 13 604.0)" text-anchor="middle" dominant-baseline="central" font-size="11" fill="#555" font-family="Liberation Sans">2</text><text x="13" y="719.0" transform="rotate(-90 13 719.0)" text-anchor="middle" dominant-baseline="central" font-size="11" fill="#555" font-family="Liberation Sans">3</text></svg>
<div class="r" style="left:283.00px;top:259.00px;width:977.00px;height:522.00px;background:#fff;box-shadow:0 0 0 1px #d4d4d4;"></div>
<div class="r" style="left:396.80px;top:373.70px;width:156.50px;height:40.30px;background:#c6c6c6;"></div>
<div class="t" style="left:397.00px;top:377.46px;font-size:16px;color:#1a1a1a;letter-spacing:0.079px;">Agriculture Insurance Conference</div>
<div class="t" style="left:397.00px;top:418.06px;font-size:16px;color:#1a1a1a;letter-spacing:-0.022px;">Central Sierra Insurance</div>
<div class="t" style="left:397.00px;top:459.06px;font-size:16px;color:#1a1a1a;letter-spacing:0.278px;">May 10-12</div>
<div class="t" style="left:397.00px;top:500.06px;font-size:16px;color:#1a1a1a;letter-spacing:0.068px;">You are cordially invited to join us for Central Sierra Insurance’s Agriculture Insurance Conference, Oct.</div>
<div class="t" style="left:397.00px;top:524.76px;font-size:16px;color:#1a1a1a;letter-spacing:0.032px;">10-12 at Westfield Hotel &amp; Spa in North Kansas City, Missouri.</div>
<div class="t" style="left:397.00px;top:564.96px;font-size:16px;color:#1a1a1a;letter-spacing:0.164px;">Please help us to determine the final attendance count by completing this form for each individual</div>
<div class="t" style="left:397.00px;top:589.76px;font-size:16px;color:#1a1a1a;letter-spacing:0.161px;">attending from your agency. Complete this form and fax or email (apelandale@centralsierra.com) to</div>
<div class="t" style="left:397.00px;top:614.56px;font-size:16px;color:#1a1a1a;letter-spacing:0.006px;">Asia Pelandale by February 23. Print a copy for your records.</div>
<svg class="r" style="left:431.00px;top:628.50px;" width="69" height="4" viewBox="0 0 69 4"><path d="M0 3 l1.5 -2.5 l1.5 2.5 l1.5 -2.5 l1.5 2.5 l1.5 -2.5 l1.5 2.5 l1.5 -2.5 l1.5 2.5 l1.5 -2.5 l1.5 2.5 l1.5 -2.5 l1.5 2.5 l1.5 -2.5 l1.5 2.5 l1.5 -2.5 l1.5 2.5 l1.5 -2.5 l1.5 2.5 l1.5 -2.5 l1.5 2.5 l1.5 -2.5 l1.5 2.5 l1.5 -2.5 l1.5 2.5 l1.5 -2.5 l1.5 2.5 l1.5 -2.5 l1.5 2.5 l1.5 -2.5 l1.5 2.5 l1.5 -2.5 l1.5 2.5 l1.5 -2.5 l1.5 2.5 l1.5 -2.5 l1.5 2.5 l1.5 -2.5 l1.5 2.5 l1.5 -2.5 l1.5 2.5 l1.5 -2.5 l1.5 2.5 l1.5 -2.5 l1.5 2.5 l1.5 -2.5 l1.5 2.5" fill="none" stroke="#e23b3b" stroke-width="0.9"/></svg>
<div class="t" style="left:397.00px;top:655.16px;font-size:16px;color:#1a1a1a;letter-spacing:0.395px;">Name:</div>
<div class="t" style="left:397.00px;top:696.36px;font-size:16px;color:#1a1a1a;letter-spacing:-0.003px;">Agency Name:</div>
<div class="r" style="left:398.00px;top:744.00px;width:6.50px;height:6.50px;background:#1a1a1a;border-radius:50%;"></div>
<div class="t" style="left:425.80px;top:737.86px;font-size:16px;color:#1a1a1a;letter-spacing:0.117px;">No, I won’t be able to make it to this year’s Agriculture Insurance Conference.</div>
<svg class="r" style="left:960.00px;top:300.00px;" width="246" height="115" viewBox="0 0 1536 718"><defs><clipPath id="fc"><rect x="60" y="60" width="1415" height="598"/></clipPath></defs><g clip-path="url(#fc)">
<rect x="60" y="60" width="1415" height="598" fill="#cfe1f3"/>
<rect x="60" y="105" width="1415" height="210" fill="#d2e3f4"/>
<path d="M520 180c0-35 40-55 75-45 15-40 75-50 100-15 25-30 80-25 95 10 35-15 85-5 95 30 25 5 30 40 10 55-20 15-50 10-70 5H560c-30 0-45-20-40-40z" fill="#ffffff"/>
<path d="M60 300C250 255 480 285 600 260 780 225 980 228 1160 218 1300 210 1400 232 1475 255V612H60z" fill="#79b035"/>
<path d="M600 262C760 228 960 230 1120 228 1100 270 1110 300 1130 330 950 325 760 320 600 300z" fill="#69a42c"/>
<g fill="#3f7f1c">
<circle cx="95" cy="150" r="45"/><circle cx="165" cy="135" r="42"/><circle cx="235" cy="125" r="42"/><circle cx="310" cy="122" r="42"/><circle cx="385" cy="125" r="42"/><circle cx="455" cy="150" r="45"/><circle cx="515" cy="200" r="38"/><circle cx="95" cy="220" r="50"/><circle cx="200" cy="210" r="55"/><circle cx="310" cy="205" r="55"/><circle cx="410" cy="215" r="50"/><circle cx="480" cy="225" r="40"/>
<rect x="60" y="110" width="60" height="170"/>
</g>
<g fill="#4f9624">
<circle cx="150" cy="185" r="45"/><circle cx="270" cy="175" r="48"/><circle cx="370" cy="180" r="45"/><circle cx="450" cy="200" r="38"/>
</g>
<path d="M92 310l8-70-15-20 10-5 12 15 10-15 8 5-12 22 6 68zM160 300l8-55h10l4 55zM222 320l6-75-12-18 10-4 10 14 8-14 10 4-14 20 4 73zM288 300l6-40h10l2 40zM330 290l4-30h8l2 30zM403 290l5-40h10l3 40zM440 310l14-110h14l6 110z" fill="#d2842c"/>
<path d="M60 335C300 305 700 292 1000 308 1250 322 1400 350 1475 395V612H60z" fill="#8fbd3a"/>
<rect x="470" y="330" width="1005" height="282" fill="#a2c63c"/>
<path d="M470 338Q985 326 1500 395Q1027 358 553 401Z" fill="#f3d94a"/>
<path d="M637 465Q1068 390 1500 395Q1120 430 741 544Z" fill="#f3d94a"/>
<path d="M824 608Q1162 461 1500 395Q1233 464 967 612L830 612Z" fill="#f3d94a"/>
<path d="M1072 612Q1286 464 1500 395Q1358 464 1216 612Z" fill="#f3d94a"/>
<path d="M1320 612Q1410 464 1500 395Q1482 464 1464 612Z" fill="#f3d94a"/>
<path d="M60 372C200 345 350 335 470 338L830 612H60z" fill="#f0b46c"/>
<path d="M60 385l195 227h70L100 372zM190 358l235 254h70L250 352zM325 344l270 268h70L385 340zM60 520l80 92h55L60 455z" fill="#d5872a"/>
<path d="M462 338l368 274h-45L430 340z" fill="#c27722"/>
<path d="M1100 265c25-40 55-50 80-45v95h-70c-20-15-20-30-10-50z" fill="#e4c23c"/>
<path d="M1390 185c40-5 70 10 85 25v55h-85z" fill="#e6c23a"/>
<path d="M1320 305l155 35v45l-155-40z" fill="#e0892e"/>
<path d="M1280 205l52-58 55 58v112h-107z" fill="#d3281c"/>
<rect x="1322" y="240" width="52" height="60" fill="#a01b13"/>
<path d="M1180 208l62-62h92l-55 62z" fill="#2c3036"/>
<rect x="1190" y="202" width="88" height="124" rx="6" fill="#e8e8e8"/>
<rect x="1232" y="202" width="7" height="124" fill="#b5b5b5"/>
<rect x="60" y="60" width="1415" height="45" fill="#2b2f33"/>
<rect x="60" y="612" width="1415" height="46" fill="#2b2f33"/>
</g></svg>
<div class="r" style="left:0.00px;top:780.50px;width:1536.00px;height:1.00px;background:#d8d8d8;"></div>
<div class="r" style="left:0.00px;top:781.00px;width:1536.00px;height:35.00px;background:#f1f1f1;"></div>
<div class="t" style="left:11.70px;top:795.42px;font-size:12.5px;color:#666;letter-spacing:-0.114px;">Page 1 of 2</div>
<div class="t" style="left:100.30px;top:795.42px;font-size:12.5px;color:#666;letter-spacing:0.216px;">2 of 275 words</div>
<svg class="r" style="left:213.00px;top:791.00px;" width="17" height="15" viewBox="0 0 17 15"><path d="M1 1.5h6l1 1v11l-1-1H1z" fill="none" stroke="#666" stroke-width="1.1"/><path d="M8 2.5v11" stroke="#666" stroke-width="1"/><path d="M10 5l5 5M15 5l-5 5" stroke="#555" stroke-width="1.5"/></svg>
<svg class="r" style="left:263.00px;top:790.00px;" width="17" height="17" viewBox="0 0 17 17"><circle cx="3.5" cy="3.5" r="3" fill="#555"/><rect x="3" y="4" width="13" height="12" fill="none" stroke="#666" stroke-width="1.1"/><path d="M4 4h12" stroke="#555" stroke-width="2"/><path d="M5 8.5h9M5 11h9M5 13.5h9M8 7v8M11 7v8" stroke="#777" stroke-width="0.9"/></svg>
<div class="r" style="left:1232.00px;top:781.00px;width:45.00px;height:35.00px;background:#c8c8c8;"></div>
<svg class="r" style="left:1198.00px;top:790.00px;" width="23" height="20" viewBox="0 0 23 20"><path d="M1 1.5h9.5v17H1zM11.5 1.5H21v17h-9.5z" fill="none" stroke="#666" stroke-width="1.1"/><path d="M3 5h6M3 8h6M3 11h6M3 14h6M13.5 5h6M13.5 8h6M13.5 11h6M13.5 14h6" stroke="#777" stroke-width="1"/></svg>
<svg class="r" style="left:1244.00px;top:791.00px;" width="22" height="20" viewBox="0 0 22 20"><rect x="0.5" y="0.5" width="20" height="18" fill="none" stroke="#666" stroke-width="1.1"/><path d="M3 4h15M3 7h15M3 10h15M3 13h15M3 16h15" stroke="#777" stroke-width="1.1"/></svg>
<svg class="r" style="left:1288.00px;top:790.00px;" width="23" height="22" viewBox="0 0 23 22"><path d="M1 1h16v15H1z" fill="none" stroke="#666" stroke-width="1.1"/><path d="M3.5 4.5h11M3.5 7.5h11M3.5 10.5h8" stroke="#777" stroke-width="1"/><circle cx="16" cy="15.5" r="5.5" fill="#666" stroke="#f1f1f1" stroke-width="1.2"/><path d="M12.5 13.5c1.5 0 2.5 1 2 2.5s1 2 2.5 1.5M16.5 10.5c0 1.5 1.5 2 3 2" fill="none" stroke="#f1f1f1" stroke-width="1"/></svg>
<div class="r" style="left:1326.00px;top:798.50px;width:9.00px;height:2.00px;background:#666;"></div>
<div class="r" style="left:1340.40px;top:799.50px;width:118.00px;height:1.50px;background:#aaa;"></div>
<div class="r" style="left:1396.40px;top:793.00px;width:5.80px;height:13.50px;background:#666;"></div>
<div class="r" style="left:1463.00px;top:799.00px;width:11.50px;height:2.00px;background:#666;"></div>
<div class="r" style="left:1467.70px;top:794.30px;width:2.10px;height:11.40px;background:#666;"></div>
<div class="t" style="left:1494.00px;top:795.42px;font-size:12.5px;color:#666;letter-spacing:0.010px;">100%</div>
<div class="r" style="left:653.00px;top:208.00px;width:185.00px;height:104.00px;background:#fff;box-sizing:border-box;border:1px solid #c6c6c6;"></div>
<div class="r" style="left:655.70px;top:210.00px;width:46.00px;height:80.00px;background:#c6c6c6;"></div>
<svg class="r" style="left:660.00px;top:213.00px;" width="32" height="32" viewBox="0 0 32 32"><circle cx="15.7" cy="15.3" r="14" fill="#fff" stroke="#8a8a8a" stroke-width="1.1"/><ellipse cx="15.7" cy="15.3" rx="6.5" ry="14" fill="none" stroke="#8a8a8a" stroke-width="1"/><path d="M1.7 15.3h28M3.5 8.5h24.4M3.5 22h24.4" stroke="#8a8a8a" stroke-width="1"/></svg>
<svg class="r" style="left:672.50px;top:238.50px;" width="27" height="14" viewBox="0 0 27 14"><rect x="1.5" y="1.3" width="14" height="8.5" rx="4.2" fill="none" stroke="#4a7ebb" stroke-width="2.5"/><rect x="10.5" y="3.5" width="14" height="8.5" rx="4.2" fill="none" stroke="#4a7ebb" stroke-width="2.5"/></svg>
<div class="t" style="left:666.00px;top:254.73px;font-size:14.5px;color:#6a6a6a;letter-spacing:0.300px;">Link</div>
<svg class="r" style="left:724.50px;top:214.00px;" width="28" height="34" viewBox="0 0 28 34"><rect x="0.5" y="0.5" width="20" height="32.5" fill="#fff" stroke="#888" stroke-width="1"/></svg>
<div class="t" style="left:705.00px;top:254.73px;font-size:14.5px;color:#6a6a6a;letter-spacing:0.032px;">Bookmark</div>
<svg class="r" style="left:784.00px;top:213.50px;" width="36" height="35" viewBox="0 0 36 35"><rect x="14.5" y="5.5" width="20" height="28" fill="#fff" stroke="#888" stroke-width="1"/><rect x="0.5" y="0.5" width="21" height="28" fill="#fff" stroke="#888" stroke-width="1"/><rect x="9" y="10.5" width="11" height="3" fill="#e0603a"/><rect x="22" y="25" width="10" height="3" fill="#e0603a"/><path d="M20 17c5 0 8 2 8 6" fill="none" stroke="#666" stroke-width="1.8"/><path d="M24 21l4 4 4-4" fill="none" stroke="#666" stroke-width="1.8"/></svg>
<div class="t" style="left:781.90px;top:254.65px;font-size:14px;color:#555;letter-spacing:-0.004px;">Cross-</div>
<div class="t" style="left:774.00px;top:273.75px;font-size:14px;color:#555;letter-spacing:-0.093px;">reference</div>
<div class="t" style="left:730.00px;top:295.34px;font-size:12px;color:#666;letter-spacing:0.871px;">Links</div>
<div class="r" style="left:655.40px;top:311.70px;width:245.60px;height:192.30px;background:#fff;box-sizing:border-box;border:1px solid #cfcfcf;"></div>
<div class="t" style="left:665.00px;top:321.65px;font-size:14px;color:#444;font-weight:bold;letter-spacing:0.318px;">Add a Hyperlink (Ctrl+K)</div>
<div class="t" style="left:665.20px;top:349.95px;font-size:14px;color:#666;letter-spacing:0.209px;">Create a link in your document for</div>
<div class="t" style="left:665.20px;top:370.05px;font-size:14px;color:#666;letter-spacing:0.040px;">quick access to webpages and files.</div>
<div class="t" style="left:665.20px;top:409.15px;font-size:14px;color:#666;letter-spacing:0.148px;">Hyperlinks can also take you to</div>
<div class="t" style="left:665.20px;top:429.75px;font-size:14px;color:#666;letter-spacing:0.088px;">places in your document, such as</div>
<div class="t" style="left:665.20px;top:449.75px;font-size:14px;color:#666;letter-spacing:0.235px;">headings and bookmarks.</div>
<div class="r" style="left:660.00px;top:470.00px;width:236.00px;height:1.00px;background:#e3e3e3;"></div>
<svg class="r" style="left:664.00px;top:479.00px;" width="18" height="18" viewBox="0 0 18 18"><circle cx="9" cy="9" r="8.7" fill="#3a6fb0"/><text x="9" y="14" text-anchor="middle" font-size="13" font-weight="bold" fill="#fff" font-family="Liberation Sans">?</text></svg>
<div class="t" style="left:690.20px;top:482.45px;font-size:14px;color:#3a6aa6;font-weight:bold;letter-spacing:0.379px;">Tell me more</div>
<div class="r" style="left:575px;top:144px;width:200px;height:200px;border-radius:50%;overflow:hidden;"><div class="r" style="left:-575px;top:-144px;width:1536px;height:816px;transform-origin:675px 245px;transform:scale(1.5);"><div class="r" style="left:500.00px;top:60.00px;width:400.00px;height:148.00px;background:#f1f1f1;"></div>
<div class="r" style="left:500.00px;top:208.00px;width:400.00px;height:1.00px;background:#d6d6d6;"></div>
<div class="r" style="left:500.00px;top:209.00px;width:400.00px;height:191.00px;background:#e6e6e6;"></div>
<div class="r" style="left:396.00px;top:213.50px;width:504.00px;height:16.50px;background:#fff;"></div>
<div class="t" style="left:508.00px;top:216.69px;font-size:11px;color:#555;">1</div>
<div class="r" style="left:524.88px;top:221.50px;width:1.10px;height:2.00px;background:#777;"></div>
<div class="r" style="left:539.25px;top:221.50px;width:1.10px;height:2.00px;background:#777;"></div>
<div class="r" style="left:553.62px;top:221.50px;width:1.10px;height:2.00px;background:#777;"></div>
<div class="r" style="left:568.00px;top:219.00px;width:1.10px;height:7.00px;background:#666;"></div>
<div class="r" style="left:582.38px;top:221.50px;width:1.10px;height:2.00px;background:#777;"></div>
<div class="r" style="left:596.75px;top:221.50px;width:1.10px;height:2.00px;background:#777;"></div>
<div class="r" style="left:611.12px;top:221.50px;width:1.10px;height:2.00px;background:#777;"></div>
<div class="t" style="left:623.00px;top:216.69px;font-size:11px;color:#555;">2</div>
<div class="r" style="left:639.88px;top:221.50px;width:1.10px;height:2.00px;background:#777;"></div>
<div class="r" style="left:654.25px;top:221.50px;width:1.10px;height:2.00px;background:#777;"></div>
<div class="r" style="left:668.62px;top:221.50px;width:1.10px;height:2.00px;background:#777;"></div>
<div class="r" style="left:683.00px;top:219.00px;width:1.10px;height:7.00px;background:#666;"></div>
<div class="r" style="left:697.38px;top:221.50px;width:1.10px;height:2.00px;background:#777;"></div>
<div class="r" style="left:711.75px;top:221.50px;width:1.10px;height:2.00px;background:#777;"></div>
<div class="r" style="left:726.12px;top:221.50px;width:1.10px;height:2.00px;background:#777;"></div>
<div class="t" style="left:738.00px;top:216.69px;font-size:11px;color:#555;">3</div>
<div class="r" style="left:754.88px;top:221.50px;width:1.10px;height:2.00px;background:#777;"></div>
<div class="r" style="left:769.25px;top:221.50px;width:1.10px;height:2.00px;background:#777;"></div>
<div class="r" style="left:783.62px;top:221.50px;width:1.10px;height:2.00px;background:#777;"></div>
<div class="r" style="left:798.00px;top:219.00px;width:1.10px;height:7.00px;background:#666;"></div>
<div class="r" style="left:812.38px;top:221.50px;width:1.10px;height:2.00px;background:#777;"></div>
<div class="r" style="left:826.75px;top:221.50px;width:1.10px;height:2.00px;background:#777;"></div>
<div class="r" style="left:841.12px;top:221.50px;width:1.10px;height:2.00px;background:#777;"></div>
<div class="t" style="left:853.00px;top:216.69px;font-size:11px;color:#555;">4</div>
<div class="r" style="left:869.88px;top:221.50px;width:1.10px;height:2.00px;background:#777;"></div>
<div class="r" style="left:884.25px;top:221.50px;width:1.10px;height:2.00px;background:#777;"></div>
<div class="r" style="left:898.62px;top:221.50px;width:1.10px;height:2.00px;background:#777;"></div>
<div class="r" style="left:913.00px;top:219.00px;width:1.10px;height:7.00px;background:#666;"></div>
<div class="r" style="left:927.38px;top:221.50px;width:1.10px;height:2.00px;background:#777;"></div>
<div class="r" style="left:941.75px;top:221.50px;width:1.10px;height:2.00px;background:#777;"></div>
<div class="r" style="left:956.12px;top:221.50px;width:1.10px;height:2.00px;background:#777;"></div>
<div class="r" style="left:283.00px;top:259.00px;width:617.00px;height:141.00px;background:#fff;"></div>
<div class="r" style="left:653.00px;top:79.00px;width:60.00px;height:128.00px;background:#c6c6c6;"></div>
<div class="t" style="left:600.00px;top:194.24px;font-size:12px;color:#6e6e6e;letter-spacing:0.204px;">Media</div>
<div class="r" style="left:653.00px;top:208.00px;width:185.00px;height:104.00px;background:#fff;box-sizing:border-box;border:1px solid #c6c6c6;"></div>
<div class="r" style="left:655.70px;top:210.00px;width:46.00px;height:80.00px;background:#c6c6c6;"></div>
<svg class="r" style="left:660.00px;top:213.00px;" width="32" height="32" viewBox="0 0 32 32"><circle cx="15.7" cy="15.3" r="14" fill="#fff" stroke="#8a8a8a" stroke-width="1.1"/><ellipse cx="15.7" cy="15.3" rx="6.5" ry="14" fill="none" stroke="#8a8a8a" stroke-width="1"/><path d="M1.7 15.3h28M3.5 8.5h24.4M3.5 22h24.4" stroke="#8a8a8a" stroke-width="1"/></svg>
<svg class="r" style="left:672.50px;top:238.50px;" width="27" height="14" viewBox="0 0 27 14"><rect x="1.5" y="1.3" width="14" height="8.5" rx="4.2" fill="none" stroke="#4a7ebb" stroke-width="2.5"/><rect x="10.5" y="3.5" width="14" height="8.5" rx="4.2" fill="none" stroke="#4a7ebb" stroke-width="2.5"/></svg>
<div class="t" style="left:666.00px;top:254.73px;font-size:14.5px;color:#6a6a6a;letter-spacing:0.300px;">Link</div>
<svg class="r" style="left:724.50px;top:214.00px;" width="28" height="34" viewBox="0 0 28 34"><rect x="0.5" y="0.5" width="20" height="32.5" fill="#fff" stroke="#888" stroke-width="1"/></svg>
<div class="t" style="left:705.00px;top:254.73px;font-size:14.5px;color:#6a6a6a;letter-spacing:0.032px;">Bookmark</div>
<svg class="r" style="left:673.80px;top:244.30px;" width="17" height="26" viewBox="0 0 17 26"><path d="M0 0V21.6L5.4 16.2 9.5 24.3 12.2 23 8.1 14.9H14.9Z" fill="#111" stroke="#111" stroke-width="0.8" stroke-linejoin="round"/></svg></div></div>
<div class="r" style="left:575px;top:144px;width:200px;height:200px;border-radius:50%;box-sizing:border-box;border:3.6px solid #141414;box-shadow:0 0 1.5px rgba(0,0,0,0.6), inset 0 0 1.5px rgba(0,0,0,0.5);"></div>
</body></html>
